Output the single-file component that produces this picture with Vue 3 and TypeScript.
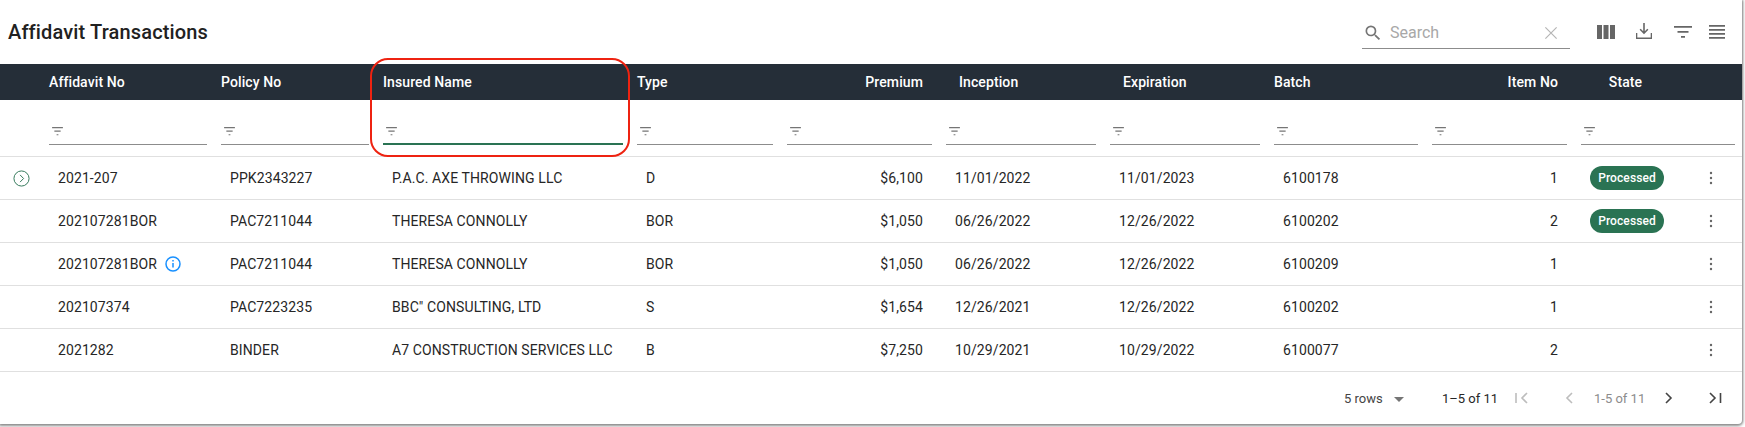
<template>
  <div class="page">
    <div class="card">
      <header class="toolbar">
        <h1 class="title">Affidavit Transactions</h1>
        <div class="search">
          <svg class="search-icon" viewBox="0 0 24 24" width="20" height="20"><path d="M15.5 14h-.79l-.28-.27A6.47 6.47 0 0 0 16 9.5 6.5 6.5 0 1 0 9.5 16c1.61 0 3.09-.59 4.23-1.57l.27.28v.79l5 4.99L20.49 19l-4.99-5zm-6 0C7.01 14 5 11.99 5 9.5S7.01 5 9.5 5 14 7.01 14 9.5 11.99 14 9.5 14z" /></svg>
          <span class="search-text">Search</span>
          <svg class="clear-icon" viewBox="0 0 24 24" width="18" height="18"><path d="M4.500 4.500l15 15M19.500 4.500l-15 15" /></svg>
        </div>
        <div class="tools">
          <svg class="tool-columns" viewBox="0 0 18 14" width="18" height="14"><path d="M0 0h5v14H0zM6.500 0h5v14h-5zM13 0h5v14h-5z" /></svg>
          <svg class="tool-download" viewBox="0 0 16 16" width="16" height="16"><path d="M7.200 0h1.600v8.200l2.500-2.500 1.100 1.100L8 11.200 3.600 6.800l1.100-1.100 2.500 2.500zM0 10h1.300v4.600h13.400V10H16v6H0z" /></svg>
          <svg class="tool-filter" viewBox="0 0 18 12" width="18" height="12"><path d="M0 0h18v1.800H0zM3.500 5h11v1.800h-11zM7 10h4v1.800H7z" /></svg>
          <svg class="tool-lines" viewBox="0 0 16 14" width="16" height="14"><path d="M0 0h16v1.800H0zM0 4h16v1.800H0zM0 8h16v1.800H0zM0 12h16v1.800H0z" /></svg>
        </div>
      </header>

      <table class="grid">
        <colgroup>
          <col v-for="(w, i) in widths" :key="i" :style="{ width: w + 'px' }" />
        </colgroup>
        <thead>
          <tr class="head">
            <th></th>
            <th v-for="c in columns" :key="c.label" :class="c.headClass">{{ c.label }}</th>
            <th></th>
          </tr>
          <tr class="filters">
            <th></th>
            <th v-for="(c, i) in columns" :key="c.label" :colspan="i === columns.length - 1 ? 2 : 1">
              <div class="filter" :class="{ active: c.label === 'Insured Name' }">
                <svg viewBox="0 0 14 10" width="13" height="9"><path d="M1 0h12v1.300H1zM3.500 4h7v1.300h-7zM6 8h2v1.300H6z" /></svg>
              </div>
            </th>
          </tr>
        </thead>
        <tbody>
          <tr v-for="(r, i) in rows" :key="i" class="row">
            <td class="expand">
              <svg v-if="i === 0" viewBox="0 0 18 18" width="17" height="17"><circle cx="9" cy="9" r="8" /><path d="M7.500 5.200L11.200 9l-3.700 3.800" /></svg>
            </td>
            <td class="cell">
              <span>{{ r.affidavit }}</span>
              <svg v-if="r.info" class="info" viewBox="0 0 16 16" width="16" height="16"><circle cx="8" cy="8" r="7" /><path d="M8 7v4.600M8 4v1.600" /></svg>
            </td>
            <td class="cell">{{ r.policy }}</td>
            <td class="cell">{{ r.insured }}</td>
            <td class="cell">{{ r.type }}</td>
            <td class="cell num">{{ r.premium }}</td>
            <td class="cell">{{ r.inception }}</td>
            <td class="cell">{{ r.expiration }}</td>
            <td class="cell">{{ r.batch }}</td>
            <td class="cell num">{{ r.item }}</td>
            <td class="state"><span v-if="r.processed" class="chip">Processed</span></td>
            <td class="actions">
              <svg viewBox="0 0 4 14" width="4" height="14"><circle cx="2" cy="2" r="1.200" /><circle cx="2" cy="7" r="1.200" /><circle cx="2" cy="12" r="1.200" /></svg>
            </td>
          </tr>
        </tbody>
      </table>

      <footer class="pager">
        <span class="rows-select">5 rows</span>
        <svg class="caret" viewBox="0 0 10 5" width="10" height="5"><path d="M0 0h10L5 5z" /></svg>
        <span class="range">1–5 of 11</span>
        <svg class="page-btn off first" viewBox="0 0 16 16" width="16" height="16"><path d="M2 3v10M13 3L8 8l5 5" /></svg>
        <svg class="page-btn off prev" viewBox="0 0 16 16" width="16" height="16"><path d="M11 3L6 8l5 5" /></svg>
        <span class="range muted">1-5 of 11</span>
        <svg class="page-btn next" viewBox="0 0 16 16" width="16" height="16"><path d="M5 3l5 5-5 5" /></svg>
        <svg class="page-btn last" viewBox="0 0 16 16" width="16" height="16"><path d="M3 3l5 5-5 5M13.500 3v10" /></svg>
      </footer>

      <div class="highlight"></div>
    </div>
  </div>
</template>

<script setup lang="ts">
interface Column {
  label: string
  headClass?: string
}

interface Row {
  affidavit: string
  info?: boolean
  policy: string
  insured: string
  type: string
  premium: string
  inception: string
  expiration: string
  batch: string
  item: number
  processed?: boolean
}

const widths = [42, 172, 162, 254, 150, 159, 164, 164, 158, 149, 106, 62]

const columns: Column[] = [
  { label: 'Affidavit No' },
  { label: 'Policy No' },
  { label: 'Insured Name' },
  { label: 'Type' },
  { label: 'Premium', headClass: 'num' },
  { label: 'Inception', headClass: 'inset' },
  { label: 'Expiration', headClass: 'inset' },
  { label: 'Batch' },
  { label: 'Item No', headClass: 'num' },
  { label: 'State', headClass: 'center' },
]

const rows: Row[] = [
  { affidavit: '2021-207', policy: 'PPK2343227', insured: 'P.A.C. AXE THROWING LLC', type: 'D', premium: '$6,100', inception: '11/01/2022', expiration: '11/01/2023', batch: '6100178', item: 1, processed: true },
  { affidavit: '202107281BOR', policy: 'PAC7211044', insured: 'THERESA CONNOLLY', type: 'BOR', premium: '$1,050', inception: '06/26/2022', expiration: '12/26/2022', batch: '6100202', item: 2, processed: true },
  { affidavit: '202107281BOR', info: true, policy: 'PAC7211044', insured: 'THERESA CONNOLLY', type: 'BOR', premium: '$1,050', inception: '06/26/2022', expiration: '12/26/2022', batch: '6100209', item: 1 },
  { affidavit: '202107374', policy: 'PAC7223235', insured: 'BBC" CONSULTING, LTD', type: 'S', premium: '$1,654', inception: '12/26/2021', expiration: '12/26/2022', batch: '6100202', item: 1 },
  { affidavit: '2021282', policy: 'BINDER', insured: 'A7 CONSTRUCTION SERVICES LLC', type: 'B', premium: '$7,250', inception: '10/29/2021', expiration: '10/29/2022', batch: '6100077', item: 2 },
]
</script>

<style>
html,
body {
  background: #fff;
}
</style>

<style scoped>
.page {
  width: 1745px;
  height: 427px;
  overflow: hidden;
  font-family: Roboto, 'Liberation Sans', sans-serif;
  color: #262626;
}
.card {
  position: relative;
  width: 1742px;
  height: 424px;
  background: #fff;
  border-radius: 0 0 4px 0;
  box-shadow: 0 1px 3px 1px rgba(0, 0, 0, 0.45), 1px 0 2px rgba(0, 0, 0, 0.12);
}
.toolbar {
  display: flex;
  align-items: center;
  height: 64px;
  padding-left: 8px;
}
.title {
  margin: 0;
  flex: 1;
  font-size: 20px;
  font-weight: 500;
  letter-spacing: 0.15px;
  color: #212121;
}
.search {
  display: flex;
  align-items: center;
  width: 208px;
  height: 32px;
  margin-top: 2px;
  padding: 0 10px 0 1px;
  box-sizing: border-box;
  border-bottom: 1px solid #8c8c8c;
}
.search-icon {
  fill: #757575;
}
.search-text {
  flex: 1;
  margin-left: 7px;
  font-size: 16px;
  color: #a8a8a8;
}
.clear-icon {
  fill: none;
  stroke: #b5b5b5;
  stroke-width: 1.6;
}
.tools {
  display: flex;
  align-items: center;
  width: 172px;
  padding-left: 27px;
  box-sizing: border-box;
}
.tools svg {
  flex: none;
  fill: #666;
}
.tool-download {
  margin: -2px 0 0 21px;
}
.tool-filter {
  margin-left: 22px;
}
.tool-lines {
  margin-left: 17px;
}
.grid {
  width: 1742px;
  table-layout: fixed;
  border-collapse: collapse;
  border-spacing: 0;
  font-size: 14px;
  letter-spacing: 0.1px;
}
.head {
  height: 36px;
  background: #252e38;
  color: #fff;
}
.head th {
  padding: 0 7px;
  font-weight: 500;
  font-size: 14px;
  letter-spacing: 0.1px;
  text-align: left;
}
.head th.num {
  padding-right: 16px;
  text-align: right;
}
.head th.inset {
  padding-left: 20px;
}
.head th.center {
  padding-right: 10px;
  text-align: center;
}
.filters {
  height: 56px;
  border-bottom: 1px solid #e0e0e0;
}
.filters th {
  padding: 0 7px;
  vertical-align: top;
}
.filter {
  display: flex;
  align-items: center;
  box-sizing: border-box;
  height: 21px;
  margin-top: 24px;
  padding-left: 2px;
  border-bottom: 1px solid #8c8c8c;
}
.filter svg {
  fill: #757575;
  margin-top: -5px;
}
.filter.active {
  border-bottom: 2px solid #2a7353;
}
.filter.active svg {
  margin-top: -4px;
}
.row {
  height: 43.2px;
  border-bottom: 1px solid #e0e0e0;
}
.cell {
  padding: 0 16px;
  white-space: nowrap;
  color: #262626;
}
.cell.num {
  text-align: right;
}
.expand {
  padding: 2px 0 0 13px;
}
.expand svg {
  display: block;
  fill: none;
  stroke: #2a7353;
  stroke-width: 1;
}
.info {
  margin-left: 8px;
  vertical-align: -3px;
  fill: none;
  stroke: #1890ff;
  stroke-width: 1.5;
}
.state {
  text-align: center;
}
.chip {
  display: inline-block;
  width: 74px;
  height: 24px;
  line-height: 24px;
  border-radius: 12px;
  background: #2a7353;
  color: #fff;
  font-size: 12px;
  font-weight: 500;
  text-align: center;
}
.actions {
  padding-left: 29px;
}
.actions svg {
  display: block;
  fill: #666;
}
.pager {
  display: flex;
  align-items: center;
  height: 52px;
  padding-left: 1344px;
  font-size: 13px;
  color: #262626;
}
.rows-select {
  width: 50px;
  color: #444;
}
.caret {
  fill: #757575;
  margin-top: 2px;
}
.range {
  margin-left: 38px;
  width: 54px;
  white-space: nowrap;
}
.range.muted {
  margin-left: 17px;
  width: 50px;
  font-size: 13px;
  color: #8c8c8c;
}
.page-btn {
  fill: none;
  stroke: #444;
  stroke-width: 1.6;
}
.page-btn.off {
  stroke: #bdbdbd;
}
.first {
  margin-left: 18px;
}
.prev {
  margin-left: 31px;
}
.next {
  margin-left: 17px;
}
.last {
  margin-left: 30px;
}
.highlight {
  position: absolute;
  left: 370px;
  top: 58px;
  width: 260px;
  height: 99px;
  box-sizing: border-box;
  border: 2px solid #ee2311;
  border-radius: 18px;
  pointer-events: none;
}
</style>
